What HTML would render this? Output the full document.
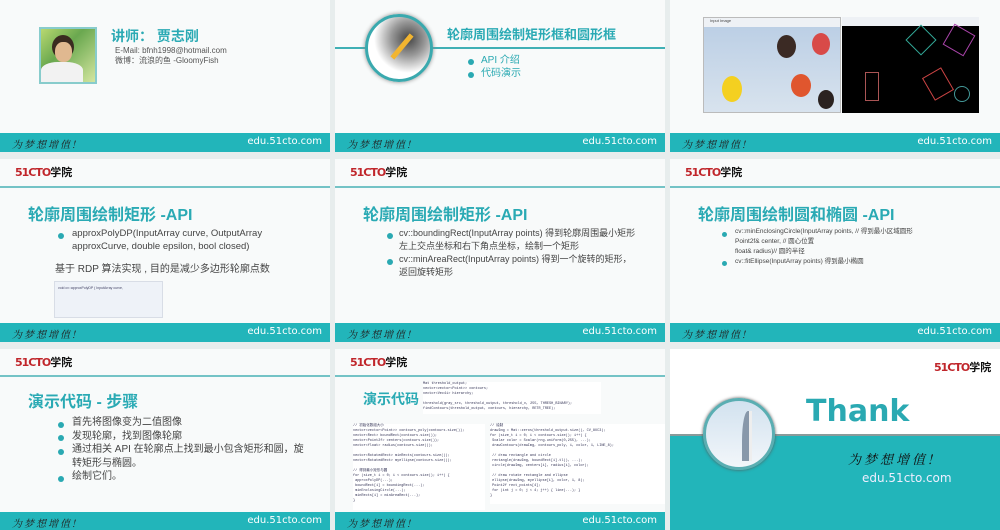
<!DOCTYPE html>
<html><head><meta charset="utf-8"><style>
*{margin:0;padding:0;box-sizing:border-box}
body{width:1000px;height:530px;background:#e7eded;position:relative;overflow:hidden;font-family:"Liberation Sans","Noto Sans CJK SC",sans-serif}
.s{position:absolute;background:#f8fafa;overflow:hidden}
.ft{position:absolute;left:0;right:0;height:19px;background:#22b5ba;color:#fff;font-size:11px}
.ft .u{position:absolute;right:8px;top:3px;font-family:"DejaVu Sans",sans-serif;font-size:10px}
.ft .w{position:absolute;left:12px;top:3px;font-family:"Noto Serif CJK SC",serif;font-style:italic;font-size:10px;color:#222;letter-spacing:2px}
.logo{position:absolute;font-weight:bold;font-size:11px;color:#111}
.logo b{color:#c0262b;font-family:"DejaVu Sans",sans-serif;letter-spacing:-1px}
.ln{position:absolute;left:0;right:0;height:2px;background:#74c3c6}
.t{position:absolute;color:#2aaab4;font-weight:bold;font-size:16px}
.b{position:absolute;color:#444;font-size:9.5px;line-height:13px}
.dot{position:absolute;width:6px;height:6px;border-radius:50%;background:#2aa9b2}
</style></head><body>

<!-- slide 1 -->
<div class="s" style="left:0;top:0;width:330px;height:152px">
 <div style="position:absolute;left:39px;top:27px;width:58px;height:57px;border:2px solid #8cc;background:linear-gradient(135deg,#b8d870,#6aa84f 40%,#d4e6a0);"></div>
 <div style="position:absolute;left:52px;top:35px;width:22px;height:24px;border-radius:50%;background:#3a2a20"></div>
 <div style="position:absolute;left:55px;top:42px;width:17px;height:20px;border-radius:45%;background:#e0b890"></div>
 <div style="position:absolute;left:41px;top:62px;width:42px;height:20px;border-radius:40% 40% 0 0;background:#f2f2f2"></div>
 <div class="t" style="left:111px;top:26px;font-size:14px">讲师： 贾志刚</div>
 <div class="b" style="left:115px;top:46px;font-size:8px;line-height:10px;color:#555">E-Mail: bfnh1998@hotmail.com<br>微博：流浪的鱼 -GloomyFish</div>
 <div class="ft" style="top:133px"><span class="w">为梦想增值!</span><span class="u">edu.51cto.com</span></div>
</div>

<!-- slide 2 -->
<div class="s" style="left:335px;top:0;width:330px;height:152px">
 <div class="ln" style="top:47px;height:1.5px;background:#40b0b5"></div>
 <div style="position:absolute;left:30px;top:14px;width:68px;height:68px;border-radius:50%;background:radial-gradient(circle at 65% 35%,#444 0,#999 30%,#fff 60%);border:3px solid #3aa9ae;box-shadow:0 0 4px #888"></div>
 <div style="position:absolute;left:52px;top:44px;width:30px;height:5px;background:#f2b530;transform:rotate(-50deg)"></div>
 <div class="t" style="left:112px;top:24px;font-size:13px">轮廓周围绘制矩形框和圆形框</div>
 <div class="dot" style="left:133px;top:59px"></div>
 <div class="dot" style="left:133px;top:72px"></div>
 <div class="b" style="left:146px;top:54px;color:#2aa9b2;font-size:10px">API 介绍<br>代码演示</div>
 <div class="ft" style="top:133px"><span class="w">为梦想增值!</span><span class="u">edu.51cto.com</span></div>
</div>

<!-- slide 3 -->
<div class="s" style="left:670px;top:0;width:330px;height:152px">
 <div style="position:absolute;left:33px;top:17px;width:138px;height:96px;background:linear-gradient(#b9cde4,#d8e3ee);border:1px solid #bbb">
  <div style="height:9px;background:#eef1f5;font-size:4px;color:#444;padding-left:6px">Input Image</div>
  <div style="position:absolute;left:73px;top:17px;width:19px;height:23px;border-radius:50%;background:#3b2a24"></div>
  <div style="position:absolute;left:108px;top:15px;width:18px;height:22px;border-radius:50%;background:#d84a48"></div>
  <div style="position:absolute;left:18px;top:58px;width:20px;height:26px;border-radius:50%;background:#f4d020"></div>
  <div style="position:absolute;left:87px;top:56px;width:20px;height:23px;border-radius:50%;background:#e0562e"></div>
  <div style="position:absolute;left:114px;top:72px;width:16px;height:19px;border-radius:50%;background:#2a2220"></div>
 </div>
 <div style="position:absolute;left:172px;top:17px;width:137px;height:96px;background:#000;border-top:9px solid #eef1f5">
  <div style="position:absolute;left:68px;top:3px;width:22px;height:22px;border:1px solid #3a9;transform:rotate(45deg)"></div>
  <div style="position:absolute;left:105px;top:2px;width:24px;height:24px;border:1px solid #a4a;transform:rotate(30deg)"></div>
  <div style="position:absolute;left:23px;top:46px;width:14px;height:29px;border:1px solid #a55"></div>
  <div style="position:absolute;left:85px;top:45px;width:22px;height:26px;border:1px solid #c44;transform:rotate(-30deg)"></div>
  <div style="position:absolute;left:112px;top:60px;width:16px;height:16px;border:1px solid #499;border-radius:50%"></div>
 </div>
 <div class="ft" style="top:133px"><span class="w">为梦想增值!</span><span class="u">edu.51cto.com</span></div>
</div>

<!-- row 2 -->
<div class="s" style="left:0;top:159px;width:330px;height:183px">
 <div class="logo" style="left:15px;top:5px"><b>51CTO</b>学院</div>
 <div class="ln" style="top:27px"></div>
 <div class="t" style="left:28px;top:42px">轮廓周围绘制矩形 -API</div>
 <div class="dot" style="left:58px;top:74px"></div>
 <div class="b" style="left:72px;top:68px;font-size:9.5px">approxPolyDP(InputArray curve, OutputArray<br>approxCurve, double epsilon, bool closed)</div>
 <div class="b" style="left:55px;top:104px;font-size:10px">基于 RDP 算法实现 , 目的是减少多边形轮廓点数</div>
 <div style="position:absolute;left:54px;top:122px;width:109px;height:37px;background:#eef2f8;border:1px solid #d8dde6;font-size:3.5px;color:#446;line-height:6px;padding:3px">void cv::approxPolyDP ( InputArray curve,<br>&nbsp;<br>&nbsp;</div>
 <div class="ft" style="top:164px"><span class="w">为梦想增值!</span><span class="u">edu.51cto.com</span></div>
</div>

<div class="s" style="left:335px;top:159px;width:330px;height:183px">
 <div class="logo" style="left:15px;top:5px"><b>51CTO</b>学院</div>
 <div class="ln" style="top:27px"></div>
 <div class="t" style="left:28px;top:42px">轮廓周围绘制矩形 -API</div>
 <div class="dot" style="left:52px;top:74px"></div>
 <div class="dot" style="left:52px;top:100px"></div>
 <div class="b" style="left:64px;top:68px;font-size:9px">cv::boundingRect(InputArray points) 得到轮廓周围最小矩形<br>左上交点坐标和右下角点坐标，绘制一个矩形<br>cv::minAreaRect(InputArray points) 得到一个旋转的矩形，<br>返回旋转矩形</div>
 <div class="ft" style="top:164px"><span class="w">为梦想增值!</span><span class="u">edu.51cto.com</span></div>
</div>

<div class="s" style="left:670px;top:159px;width:330px;height:183px">
 <div class="logo" style="left:15px;top:5px"><b>51CTO</b>学院</div>
 <div class="ln" style="top:27px"></div>
 <div class="t" style="left:28px;top:42px">轮廓周围绘制圆和椭圆 -API</div>
 <div class="dot" style="left:52px;top:73px;width:5px;height:5px"></div>
 <div class="dot" style="left:52px;top:102px;width:5px;height:5px"></div>
 <div class="b" style="left:65px;top:68px;font-size:6.5px;line-height:10px">cv::minEnclosingCircle(InputArray points, // 得到最小区域圆形<br>Point2f&amp; center, // 圆心位置<br>float&amp; radius)// 圆的半径<br>cv::fitEllipse(InputArray points) 得到最小椭圆</div>
 <div class="ft" style="top:164px"><span class="w">为梦想增值!</span><span class="u">edu.51cto.com</span></div>
</div>

<!-- row 3 -->
<div class="s" style="left:0;top:349px;width:330px;height:181px">
 <div class="logo" style="left:15px;top:5px"><b>51CTO</b>学院</div>
 <div class="ln" style="top:26px"></div>
 <div class="t" style="left:28px;top:39px">演示代码 - 步骤</div>
 <div class="dot" style="left:58px;top:73px"></div>
 <div class="dot" style="left:58px;top:86px"></div>
 <div class="dot" style="left:58px;top:100px"></div>
 <div class="dot" style="left:58px;top:127px"></div>
 <div class="b" style="left:72px;top:67px;font-size:10px;line-height:13.5px">首先将图像变为二值图像<br>发现轮廓，找到图像轮廓<br>通过相关 API 在轮廓点上找到最小包含矩形和圆，旋<br>转矩形与椭圆。<br>绘制它们。</div>
 <div class="ft" style="top:163px"><span class="w">为梦想增值!</span><span class="u">edu.51cto.com</span></div>
</div>

<div class="s" style="left:335px;top:349px;width:330px;height:181px">
 <div class="logo" style="left:15px;top:5px"><b>51CTO</b>学院</div>
 <div class="ln" style="top:26px"></div>
 <div class="t" style="left:28px;top:40px;font-size:14px">演示代码</div>
 <div style="position:absolute;left:88px;top:33px;width:178px;height:32px;background:#fff;font-size:3.5px;color:#335;line-height:5px;font-family:'Liberation Mono',monospace">Mat threshold_output;<br>vector&lt;vector&lt;Point&gt;&gt; contours;<br>vector&lt;Vec4i&gt; hierarchy;<br><br>threshold(gray_src, threshold_output, threshold_v, 255, THRESH_BINARY);<br>findContours(threshold_output, contours, hierarchy, RETR_TREE);</div>
 <div style="position:absolute;left:18px;top:75px;width:132px;height:86px;background:#fff;font-size:3.5px;color:#335;line-height:5px;font-family:'Liberation Mono',monospace">// 初始化数组大小<br>vector&lt;vector&lt;Point&gt;&gt; contours_poly(contours.size());<br>vector&lt;Rect&gt; boundRect(contours.size());<br>vector&lt;Point2f&gt; centers(contours.size());<br>vector&lt;float&gt; radius(contours.size());<br><br>vector&lt;RotatedRect&gt; minRects(contours.size());<br>vector&lt;RotatedRect&gt; myellipse(contours.size());<br><br>// 得到最小矩形与圆<br>for (size_t i = 0; i &lt; contours.size(); i++) {<br>&nbsp;approxPolyDP(...);<br>&nbsp;boundRect[i] = boundingRect(...);<br>&nbsp;minEnclosingCircle(...);<br>&nbsp;minRects[i] = minAreaRect(...);<br>}</div>
 <div style="position:absolute;left:155px;top:75px;width:175px;height:80px;background:#fff;font-size:3.5px;color:#335;line-height:5px;font-family:'Liberation Mono',monospace">// 绘制<br>drawImg = Mat::zeros(threshold_output.size(), CV_8UC3);<br>for (size_t i = 0; i &lt; contours.size(); i++) {<br>&nbsp;Scalar color = Scalar(rng.uniform(0,255), ...);<br>&nbsp;drawContours(drawImg, contours_poly, i, color, 1, LINE_8);<br><br>&nbsp;// draw rectangle and circle<br>&nbsp;rectangle(drawImg, boundRect[i].tl(), ...);<br>&nbsp;circle(drawImg, centers[i], radius[i], color);<br><br>&nbsp;// draw rotate rectangle and ellipse<br>&nbsp;ellipse(drawImg, myellipse[i], color, 1, 8);<br>&nbsp;Point2f rect_points[4];<br>&nbsp;for (int j = 0; j &lt; 4; j++) { line(...); }<br>}</div>
 <div class="ft" style="top:163px"><span class="w">为梦想增值!</span><span class="u">edu.51cto.com</span></div>
</div>

<div class="s" style="left:670px;top:349px;width:330px;height:181px;background:#fff">
 <div class="logo" style="left:264px;top:10px"><b>51CTO</b>学院</div>
 <div style="position:absolute;left:0;top:85px;width:330px;height:2px;background:#8a9a9a"></div>
 <div style="position:absolute;left:0;top:87px;width:330px;height:94px;background:#22b5ba"></div>
 <div style="position:absolute;left:33px;top:49px;width:72px;height:72px;border-radius:50%;background:linear-gradient(#d2e2ef,#f2f6fa);border:3px solid #5aaeb2;box-shadow:0 0 3px #555"></div>
 <div style="position:absolute;left:72px;top:62px;width:10px;height:50px;border-radius:60% 0 0 0;background:#8898aa;border-right:3px solid #eee"></div>
 <div style="position:absolute;left:136px;top:45px;font-family:'DejaVu Sans',sans-serif;font-weight:bold;font-size:30px;color:#2aa9b2">Thank</div>
 <div style="position:absolute;left:178px;top:100px;font-family:'Noto Serif CJK SC',serif;font-style:italic;font-size:13px;color:#111;letter-spacing:3px">为梦想增值!</div>
 <div style="position:absolute;left:192px;top:122px;font-family:'DejaVu Sans',sans-serif;font-size:12px;color:#eef">edu.51cto.com</div>
</div>
</body></html>
